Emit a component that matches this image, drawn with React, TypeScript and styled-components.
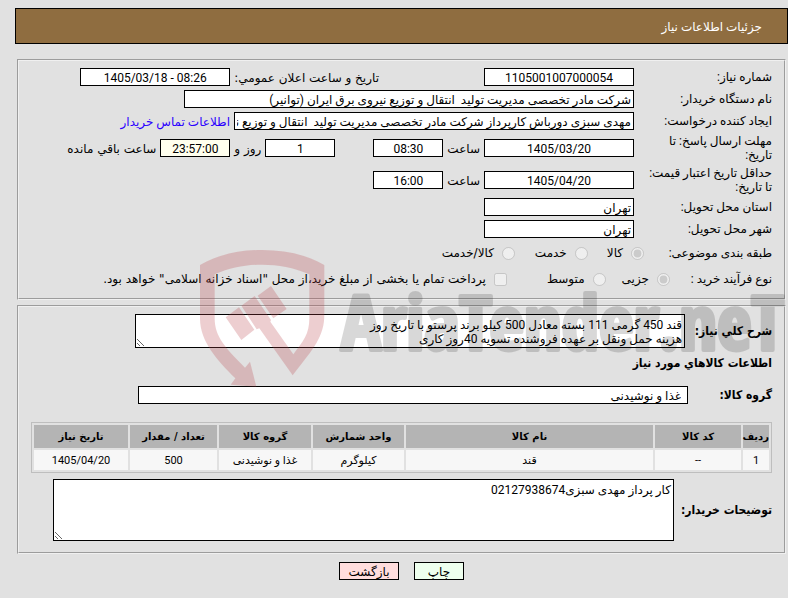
import React from "react";
import styled, { createGlobalStyle } from "styled-components";

const Global = createGlobalStyle`
  * { box-sizing: border-box; }
  body {
    margin: 0;
    background: #e1e1e1;
    color: #000;
    font: 12px/14px Roboto, "DejaVu Sans", sans-serif;
  }
  input, textarea, button { font: inherit; color: inherit; }
`;

const Page = styled.main`
  position: relative;
  direction: rtl;
  padding: 8px 0 18px;
  overflow: hidden;
`;

const TitleBar = styled.header`
  display: flex;
  align-items: center;
  height: 36px;
  margin-left: 15px;
  padding: 2px 25px 0;
  border: 1px solid #000;
  background: #8f6d40;
`;

const Title = styled.h1`
  margin: 0;
  font-size: 12px;
  font-weight: normal;
  color: #fff;
`;

const Panel = styled.fieldset<{ $top: number; $bottom: number }>`
  min-width: 0;
  margin: ${(p) => p.$top}px 2px 0 17px;
  padding: 5px 12px ${(p) => p.$bottom}px;
  border: 2px groove #f0f0f0;
`;

const Row = styled.div<{ $height?: number }>`
  display: flex;
  align-items: center;
  min-height: ${(p) => p.$height ?? 22}px;
  white-space: nowrap;
`;

const Caption = styled.label<{ $width?: number }>`
  flex: none;
  width: ${(p) => p.$width ?? 138}px;
  padding-left: 12px;
  white-space: normal;
`;

const GroupCaption = styled(Caption).attrs({ as: "span" })`
  padding-left: 0;
`;

const Inline = styled.label<{ $before?: number; $after?: number }>`
  flex: none;
  margin: 0 ${(p) => p.$before ?? 4}px 0 ${(p) => p.$after ?? 4}px;
  padding-top: 2px;
  font-family: "DejaVu Sans", sans-serif;
`;

const Field = styled.input<{ $width: number; $center?: boolean; $tint?: string; $before?: number }>`
  flex: none;
  width: ${(p) => p.$width}px;
  height: 18px;
  margin: 0 ${(p) => p.$before ?? 0}px 0 0;
  padding: 2px 2px 0;
  border: 1px solid #000;
  border-radius: 0;
  background: ${(p) => p.$tint ?? "#fff"};
  text-align: ${(p) => (p.$center ? "center" : "right")};
`;

const GoodsGroup = styled(Field)`
  padding: 2px 6px 0;
`;

const Contact = styled.a`
  margin-right: 4px;
  padding-top: 2px;
  color: #2a00ff;
  text-decoration: none;
`;

const Choice = styled.label<{ $gap: number }>`
  display: flex;
  align-items: center;
  gap: 8px;
  margin-left: ${(p) => p.$gap}px;
  font-family: "DejaVu Sans", sans-serif;
`;

const Mark = styled.input`
  flex: none;
  width: 13px;
  height: 13px;
  margin: 0;
`;

const Strong = styled.label<{ $width: number }>`
  flex: none;
  width: ${(p) => p.$width}px;
  font: bold 12px/14px "DejaVu Sans Condensed", sans-serif;
`;

const Heading = styled.h2`
  margin: 0 0 8px;
  font: bold 12px/26px "DejaVu Sans Condensed", sans-serif;
`;

const Note = styled.textarea<{ $width: number; $height: number }>`
  flex: none;
  width: ${(p) => p.$width}px;
  height: ${(p) => p.$height}px;
  padding: 3px 2px;
  border: 1px solid #000;
  border-radius: 0;
  background: #fff;
  overflow: hidden;
`;

const Goods = styled.table`
  width: 100%;
  margin: 16px 0 6px;
  border: 1px solid #bebebe;
  border-collapse: separate;
  border-spacing: 2px;
  table-layout: fixed;
`;

const Head = styled.th<{ $width?: number }>`
  width: ${(p) => (p.$width ? `${p.$width}px` : "auto")};
  height: 23px;
  padding: 1px 0 0;
  background: #b4b4b4;
  font: bold 10px/14px "DejaVu Sans", sans-serif;
  white-space: nowrap;
`;

const Cell = styled.td`
  height: 20px;
  padding: 2px 0 0;
  background: #f7f7f7;
  font-size: 11px;
  text-align: center;
`;

const Actions = styled.div`
  display: flex;
  justify-content: center;
  gap: 15px;
  margin-top: 8px;
  padding-left: 15px;
`;

const Action = styled.button<{ $width: number; $tint: string }>`
  width: ${(p) => p.$width}px;
  height: 18px;
  padding: 2px 0 0;
  border: 1px solid #000;
  background: ${(p) => p.$tint};
`;

const Watermark = styled.svg`
  position: absolute;
  top: 250px;
  right: 0;
  width: 588px;
  height: 140px;
  direction: ltr;
  pointer-events: none;
`;

const Brand = styled.text`
  font: bold 75px "Open Sans Condensed", "Roboto Condensed", sans-serif;
  fill: #000;
  stroke: #000;
  stroke-width: 4px;
  stroke-linejoin: round;
  opacity: 0.15;
`;

const columns: { title: string; width?: number; value: string }[] = [
  { title: "ردیف", width: 26, value: "1" },
  { title: "کد کالا", width: 86, value: "--" },
  { title: "نام کالا", value: "قند" },
  { title: "واحد شمارش", width: 91, value: "کیلوگرم" },
  { title: "گروه کالا", width: 92, value: "غذا و نوشیدنی" },
  { title: "تعداد / مقدار", width: 87, value: "500" },
  { title: "تاریخ نیاز", width: 94, value: "1405/04/20" },
];

export default function App() {
  return (
    <Page>
      <Global />
      <TitleBar>
        <Title>جزئیات اطلاعات نیاز</Title>
      </TitleBar>

      <Panel $top={15} $bottom={6}>
        <Row>
          <Caption htmlFor="number">شماره نیاز:</Caption>
          <Field id="number" readOnly $width={150} $center defaultValue="1105001007000054" />
          <Inline htmlFor="announced" $before={105}>تاریخ و ساعت اعلان عمومي:</Inline>
          <Field id="announced" dir="ltr" readOnly $width={150} $center defaultValue="1405/03/18 - 08:26" />
        </Row>
        <Row>
          <Caption htmlFor="buyer">نام دستگاه خریدار:</Caption>
          <Field id="buyer" readOnly $width={450} defaultValue="شرکت مادر تخصصی مدیریت تولید  انتقال و توزیع نیروی برق ایران (توانیر)" />
        </Row>
        <Row>
          <Caption htmlFor="creator">ایجاد کننده درخواست:</Caption>
          <Field id="creator" readOnly $width={400} defaultValue="مهدی سبزی دورباش کارپرداز شرکت مادر تخصصی مدیریت تولید  انتقال و توزیع نیروی برق ایران (توانیر)" />
          <Contact href="#contact">اطلاعات تماس خریدار</Contact>
        </Row>
        <Row $height={32}>
          <Caption htmlFor="reply-date">مهلت ارسال پاسخ: تا تاریخ:</Caption>
          <Field id="reply-date" readOnly $width={150} $center defaultValue="1405/03/20" />
          <Inline htmlFor="reply-time">ساعت</Inline>
          <Field id="reply-time" readOnly $width={70} $center defaultValue="08:30" />
          <Field id="days" readOnly $width={70} $center $before={38} defaultValue="1" />
          <Inline htmlFor="days">روز و</Inline>
          <Field id="left" readOnly $width={70} $center $tint="#ffffee" defaultValue="23:57:00" />
          <Inline htmlFor="left">ساعت باقي مانده</Inline>
        </Row>
        <Row $height={32}>
          <Caption htmlFor="price-date">حداقل تاریخ اعتبار قیمت: تا تاریخ:</Caption>
          <Field id="price-date" readOnly $width={150} $center defaultValue="1405/04/20" />
          <Inline htmlFor="price-time">ساعت</Inline>
          <Field id="price-time" readOnly $width={70} $center defaultValue="16:00" />
        </Row>
        <Row>
          <Caption htmlFor="province">استان محل تحویل:</Caption>
          <Field id="province" readOnly $width={150} defaultValue="تهران" />
        </Row>
        <Row>
          <Caption htmlFor="city">شهر محل تحویل:</Caption>
          <Field id="city" readOnly $width={150} defaultValue="تهران" />
        </Row>
        <Row $height={26} role="radiogroup" aria-label="طبقه بندی موضوعی">
          <GroupCaption $width={128}>طبقه بندی موضوعی:</GroupCaption>
          <Choice $gap={19}><Mark type="radio" name="subject" disabled defaultChecked />کالا</Choice>
          <Choice $gap={20}><Mark type="radio" name="subject" disabled />خدمت</Choice>
          <Choice $gap={0}><Mark type="radio" name="subject" disabled />کالا/خدمت</Choice>
        </Row>
        <Row $height={26} role="radiogroup" aria-label="نوع فرآیند خرید">
          <GroupCaption $width={102}>نوع فرآیند خرید :</GroupCaption>
          <Choice $gap={16}><Mark type="radio" name="process" disabled defaultChecked />جزیی</Choice>
          <Choice $gap={40}><Mark type="radio" name="process" disabled />متوسط</Choice>
          <Choice $gap={0}><Mark type="checkbox" disabled />پرداخت تمام یا بخشی از مبلغ خرید،از محل "اسناد خزانه اسلامی" خواهد بود.</Choice>
        </Row>
      </Panel>

      <Panel $top={5} $bottom={11}>
        <Row $height={38}>
          <Strong htmlFor="summary" $width={87}>شرح كلي نیاز:</Strong>
          <Note id="summary" readOnly $width={550} $height={34} defaultValue={"قند 450 گرمی 111 بسته معادل 500 کیلو برند پرستو با تاریخ روز\nهزینه حمل ونقل بر عهده فروشنده تسویه 40روز کاری"} />
        </Row>
        <Heading>اطلاعات کالاهاي مورد نیاز</Heading>
        <Row>
          <Strong htmlFor="group" $width={84}>گروه کالا:</Strong>
          <GoodsGroup id="group" readOnly $width={550} defaultValue="غذا و نوشیدنی" />
        </Row>
        <Goods>
          <thead>
            <tr>
              {columns.map((c) => (
                <Head key={c.title} scope="col" $width={c.width}>{c.title}</Head>
              ))}
            </tr>
          </thead>
          <tbody>
            <tr>
              {columns.map((c) => (
                <Cell key={c.title}>{c.value}</Cell>
              ))}
            </tr>
          </tbody>
        </Goods>
        <Row $height={62}>
          <Strong htmlFor="notes" $width={98}>توضیحات خریدار:</Strong>
          <Note id="notes" readOnly $width={621} $height={62} defaultValue="کار پرداز مهدی سبزی02127938674" />
        </Row>
      </Panel>

      <Actions>
        <Action type="button" $width={50} $tint="#eeffee">چاپ</Action>
        <Action type="button" $width={60} $tint="#ffdddd">بازگشت</Action>
      </Actions>

      <Watermark viewBox="0 0 588 140" aria-hidden="true">
        <g transform="translate(-10 -10) scale(0.3333)" fill="rgba(184, 64, 72, 0.26)">
          <path d="M30 75C85 44 145 30 216 30S348 44 403 75V225C403 295 362 335 308 406L208 265L200 268L154 197L194 168L243 240L241 245L310 343C340 303 358 283 358 235V103C310 82 265 74 216 74S122 82 74 103V235C74 292 108 325 165 383L180 365L199 440L122 434L136 415C82 360 30 305 30 235Z" />
          <path d="M107 232L147 202L193 269L154 300ZM203 167L243 138L290 207L250 235Z" />
        </g>
        <Brand x="141" y="100">AriaTender.neT</Brand>
      </Watermark>
    </Page>
  );
}
